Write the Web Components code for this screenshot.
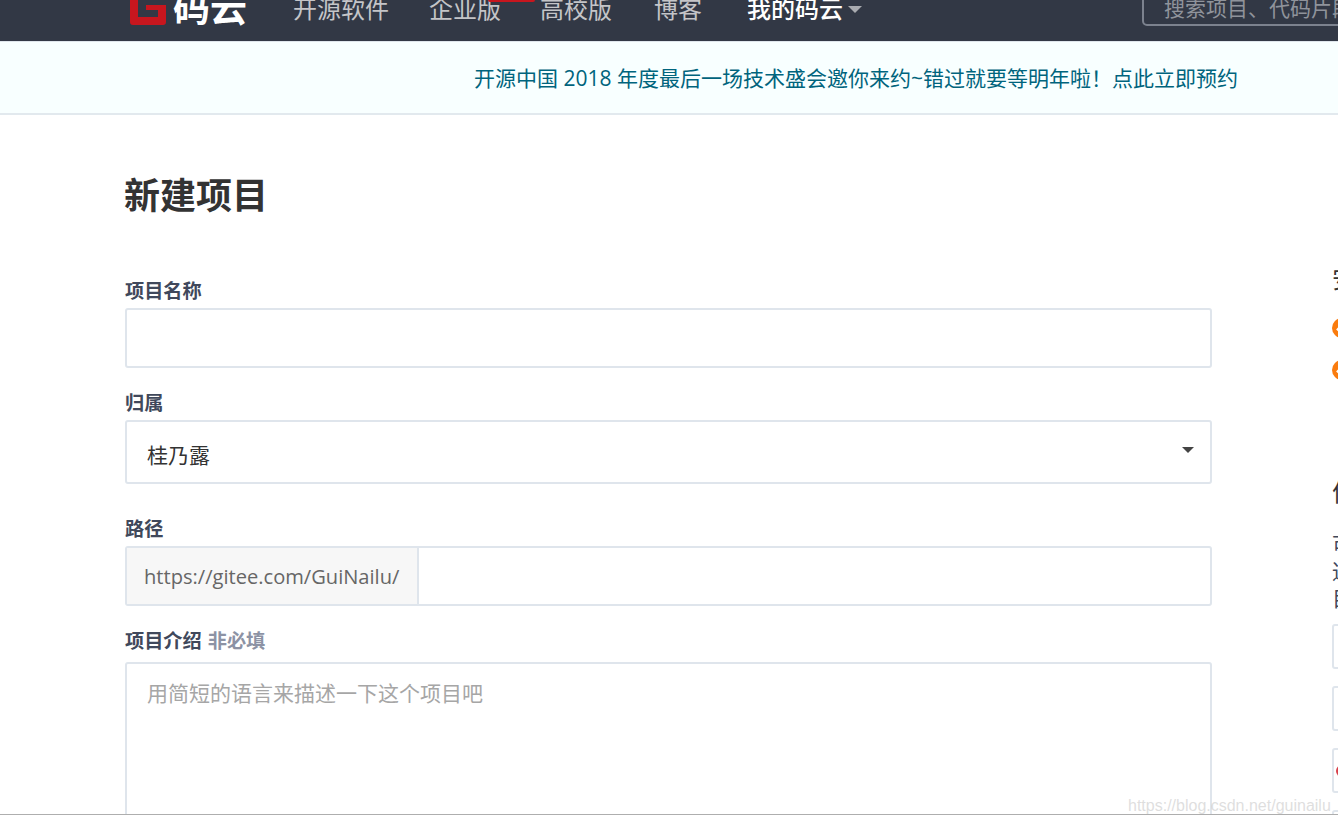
<!DOCTYPE html>
<html lang="zh">
<head>
<meta charset="utf-8">
<title>新建项目</title>
<style>
  html, body { margin: 0; padding: 0; height: 100%; background: #fff; overflow: hidden; }
  body { font-family: "Open Sans", "Noto Sans CJK SC", sans-serif; }
</style>
</head>
<body>
<gitee-page>
  <gitee-header></gitee-header>
  <gitee-notice>开源中国 2018 年度最后一场技术盛会邀你来约~错过就要等明年啦！点此立即预约</gitee-notice>
  <gitee-layout>
    <h-title slot="main">新建项目</h-title>
    <form-field slot="main" label="项目名称" height="60"></form-field>
    <form-field slot="main" label="归属" height="64" after="34" kind="select"><span>桂乃露</span></form-field>
    <form-field slot="main" label="路径" height="60" addon="https://gitee.com/GuiNailu/"></form-field>
    <form-field slot="main" label="项目介绍" hint="非必填" height="200" kind="area" labelgap="12"><span class="ph">用简短的语言来描述一下这个项目吧</span></form-field>
    <side-bar slot="side"></side-bar>
  </gitee-layout>
</gitee-page>

<script>
class GiteePage extends HTMLElement {
  constructor() {
    super();
    this.attachShadow({ mode: 'open' });
    this.shadowRoot.innerHTML = `
      <style>
        :host { display: block; position: relative; height: 815px; overflow: hidden; box-sizing: border-box; border-bottom: 1px solid #aeaeae; }
        .mark { position: absolute; left: 1128px; top: 797px; font: 16px "Liberation Sans", sans-serif; color: rgba(190,190,190,.5); white-space: nowrap; }
      </style>
      <slot></slot>
      <div class="mark">https://blog.csdn.net/guinailu</div>`;
  }
}

class GiteeHeader extends HTMLElement {
  constructor() {
    super();
    this.attachShadow({ mode: 'open' });
    this.shadowRoot.innerHTML = `
      <style>
        :host { display: flex; position: relative; height: 41px; overflow: hidden; background: #323845; box-sizing: content-box; border-bottom: 1px solid #dfe6ec; align-items: flex-end; font-family: "Open Sans", "Noto Sans CJK SC", sans-serif; }
        .logo { flex: none; width: 36px; height: 25px; margin: 0 0 16px 130px; display: block; }
        .brand { flex: none; width: 74px; margin: 0 0 13px 7px; color: #fff; font-size: 37px; font-weight: 700; line-height: 40px; white-space: nowrap; }
        nav { display: flex; margin-left: 46px; gap: 40px; padding-bottom: 12px; }
        nav a { font-size: 24px; line-height: 40px; color: #c4c5c8; white-space: nowrap; }
        nav a.school { margin-left: -1px; }
        nav a.blog { margin-left: 2px; }
        nav a.me { color: #fff; font-weight: 500; display: flex; align-items: center; gap: 5px; margin-left: 5px; }
        .caret { width: 0; height: 0; border: 7px solid transparent; border-top: 7px solid #a9abb0; border-bottom: 0; }
        .flag { position: absolute; left: 488px; top: 0; width: 47px; height: 2px; background: #c7161e; border-radius: 0 0 2px 2px; }
        .search { position: absolute; left: 1142px; top: -20px; width: 300px; height: 46px; box-sizing: border-box; border: 2px solid #7c828e; border-radius: 5px; padding-left: 20px; font-size: 21px; line-height: 52px; color: #8f939b; white-space: nowrap; }
      </style>
      <svg class="logo" viewBox="0 0 36 25"><path fill="#c7161e" d="M0 0H8V17H28V10H16V5H36V22Q36 25 33 25H3Q0 25 0 22Z"/></svg>
      <div class="brand">码云</div>
      <nav>
        <a>开源软件</a><a>企业版</a><a class="school">高校版</a><a class="blog">博客</a>
        <a class="me">我的码云<i class="caret"></i></a>
      </nav>
      <div class="flag"></div>
      <div class="search">搜索项目、代码片段...</div>`;
  }
}

class GiteeNotice extends HTMLElement {
  constructor() {
    super();
    this.attachShadow({ mode: 'open' });
    this.shadowRoot.innerHTML = `
      <style>
        :host { display: flex; justify-content: flex-end; align-items: center; box-sizing: border-box; height: 73px; padding: 0 100px 1px 0; background: #f8ffff; border-bottom: 2px solid #e2e9ee; font-size: 21px; color: #00647d; white-space: nowrap; }
      </style>
      <slot></slot>`;
  }
}

class GiteeLayout extends HTMLElement {
  constructor() {
    super();
    this.attachShadow({ mode: 'open' });
    this.shadowRoot.innerHTML = `
      <style>
        :host { display: flex; gap: 120px; padding-left: 125px; width: 1700px; }
        .main { flex: none; width: 1087px; }
        .side { flex: none; width: 300px; }
      </style>
      <div class="main"><slot name="main"></slot></div>
      <div class="side"><slot name="side"></slot></div>`;
  }
}

class HTitle extends HTMLElement {
  constructor() {
    super();
    this.attachShadow({ mode: 'open' });
    this.shadowRoot.innerHTML = `
      <style>
        :host { display: block; height: 165px; padding-top: 57px; box-sizing: border-box; margin-left: -1px; font-size: 36px; line-height: 48px; font-weight: 700; color: #333; }
      </style>
      <slot></slot>`;
  }
}

class FormField extends HTMLElement {
  constructor() {
    super();
    this.attachShadow({ mode: 'open' });
    const height = this.getAttribute('height') || 60;
    const after = this.getAttribute('after') || 24;
    const gap = this.getAttribute('labelgap') || 8;
    const hint = this.getAttribute('hint');
    const addon = this.getAttribute('addon');
    const kind = this.getAttribute('kind') || 'input';
    this.shadowRoot.innerHTML = `
      <style>
        :host { display: block; margin-bottom: ${after}px; }
        label { display: block; height: 20px; line-height: 22px; margin-bottom: ${gap}px; font-size: 19.2px; font-weight: 700; color: #40485b; white-space: nowrap; }
        label em { font-style: normal; color: #8c92a4; margin-left: 1px; }
        .box { position: relative; display: flex; align-items: center; box-sizing: border-box; height: ${height}px; border: 2px solid #dfe5ec; border-radius: 3px; background: #fff; font-size: 21px; color: #333; }
        .box.select { padding-top: 4px; }
        .box.area { align-items: flex-start; padding-top: 14px; line-height: 30px; }
        .text { padding-left: 20px; }
        ::slotted(.ph) { color: #a6a6a6; }
        .addon { flex: none; box-sizing: border-box; width: 292px; height: 100%; padding-left: 17px; display: flex; align-items: center; background: #f7f7f7; border-right: 2px solid #dfe5ec; font-size: 20.1px; color: #666; white-space: nowrap; }
        .arrow { position: absolute; left: 1055px; top: 25px; width: 0; height: 0; border: 6px solid transparent; border-top: 6px solid #444; border-bottom: 0; }
      </style>
      <label>${this.getAttribute('label')}${hint ? ` <em>${hint}</em>` : ''}</label>
      <div class="box ${kind}">
        ${addon ? `<div class="addon">${addon}</div>` : ''}
        <div class="text"><slot></slot></div>
        ${kind === 'select' ? '<i class="arrow"></i>' : ''}
      </div>`;
  }
}

class SideBar extends HTMLElement {
  constructor() {
    super();
    this.attachShadow({ mode: 'open' });
    const check = `<svg class="tick" viewBox="0 0 20 20"><circle cx="10" cy="10" r="10" fill="#fa7c0e"/><path d="M5 10.500L8.500 14L15 6.500" fill="none" stroke="#fff" stroke-width="2.500"/></svg>`;
    this.shadowRoot.innerHTML = `
      <style>
        :host { display: block; padding-top: 150px; color: #40485b; font-size: 21px; }
        .head { height: 28px; line-height: 28px; font-size: 24px; color: #333; }
        .tick { display: block; width: 20px; height: 20px; margin-bottom: 22px; }
        .ticks { margin-top: 25px; }
        .how { margin-top: 96px; height: 32px; line-height: 32px; font-size: 24px; color: #333; }
        p { margin: 23px 0 12px; line-height: 27px; }
        .card { box-sizing: border-box; height: 45px; margin-bottom: 17px; border: 2px solid #dfe5ec; border-radius: 3px; display: flex; align-items: center; padding-left: 2px; }
        .dot { width: 12px; height: 12px; border-radius: 50%; background: #d8404a; }
      </style>
      <div class="head">安全可靠</div>
      <div class="ticks">${check}${check}</div>
      <div class="how">何时使用</div>
      <p>可以导入<br>通过链接<br>目前支持</p>
      <div class="card"></div>
      <div class="card"></div>
      <div class="card"><i class="dot"></i></div>
      <div class="card"></div>`;
  }
}

customElements.define('gitee-page', GiteePage);
customElements.define('gitee-header', GiteeHeader);
customElements.define('gitee-notice', GiteeNotice);
customElements.define('gitee-layout', GiteeLayout);
customElements.define('h-title', HTitle);
customElements.define('form-field', FormField);
customElements.define('side-bar', SideBar);
</script>
</body>
</html>
